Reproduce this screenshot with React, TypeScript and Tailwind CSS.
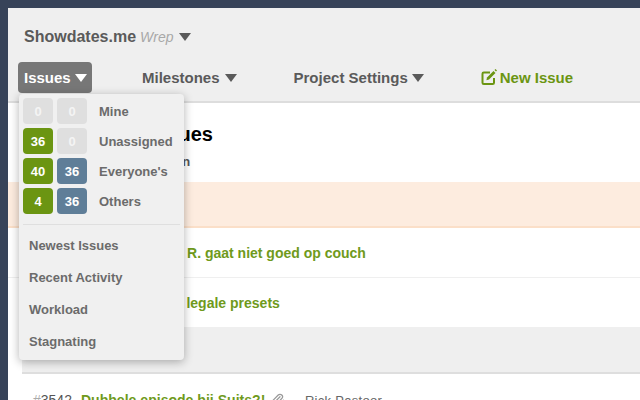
import React from "react";
import { Paperclip } from "lucide-react";

const Caret = ({ className }: { className: string }) => (
  <svg viewBox="0 0 12 8" className={`w-3 h-2 ${className}`} fill="currentColor"><path d="M0 0H12L6 8Z" /></svg>
);

const EditIcon = () => (
  <svg viewBox="0 0 16 16" className="w-4 h-4 mr-[3px] -mt-[2px]" fill="none">
    <path d="M9 3.5H2.8A1.3 1.3 0 0 0 1.5 4.8v8.9A1.3 1.3 0 0 0 2.8 15h8.9a1.3 1.3 0 0 0 1.3-1.3V9" stroke="currentColor" strokeWidth="2" />
    <path d="M6 8.5 12.5 2l2 2L8 10.5l-2.6.7Z" fill="currentColor" />
    <path d="M13.5 1l1-1 1.5 1.5-1 1Z" fill="currentColor" />
  </svg>
);

const Badge = ({ v, tone }: { v: number; tone: "g" | "b" | "n" }) => (
  <span className={`w-[30px] h-[26px] pt-px rounded-[4px] flex items-center justify-center text-[13px] font-bold ${tone === "g" ? "bg-[#6b9512] text-white" : tone === "b" ? "bg-[#5f7e98] text-white" : "bg-[#dfdfdf] text-[#f4f4f4]"}`}>{v}</span>
);

const rows: [number, "g" | "n", number, "b" | "n", string][] = [
  [0, "n", 0, "n", "Mine"],
  [36, "g", 0, "n", "Unassigned"],
  [40, "g", 36, "b", "Everyone's"],
  [4, "g", 36, "b", "Others"],
];

export default function App() {
  return (
    <div className="relative w-[640px] h-[400px] overflow-hidden bg-[#374359] pt-2 pl-2 font-['Liberation_Sans',Arial,sans-serif]">
      <div className="flex flex-col h-[392px] bg-white overflow-hidden">
        <header className="h-[95px] shrink-0 bg-[#efefef] border-b-2 border-[#dddddd] pl-4">
          <div className="flex items-center h-[20px] mt-[19px]">
            <span className="text-[16px] font-bold text-[#5a5a5a]">Showdates.me</span>
            <span className="ml-1 text-[14px] italic text-[#a8a8a8]">Wrep</span>
            <Caret className="ml-1.5 text-[#5a5a5a]" />
          </div>
          <nav className="flex items-center h-[31px] mt-[15px] -ml-1.5 pt-px text-[15px] font-bold text-[#5a5a5a]">
            <span className="w-[74px] h-[31px] -mt-px rounded-[4px] bg-[#777777] text-white flex items-center pl-1.5 pt-px">
              Issues<Caret className="ml-1 text-white" />
            </span>
            <span className="ml-[50px] flex items-center">Milestones<Caret className="ml-[5px]" /></span>
            <span className="ml-[57px] flex items-center">Project Settings<Caret className="ml-1" /></span>
            <span className="ml-[57px] flex items-center text-[#6b9512]"><EditIcon />New Issue</span>
          </nav>
        </header>
        <main className="flex-1 flex flex-col">
          <div className="h-[79px] shrink-0 pl-[86px] pt-[19px]">
            <h1 className="text-[20px] leading-[24px] font-bold text-black">Open Issues</h1>
            <p className="mt-[8px] -ml-[54px] text-[13px] leading-[16px] font-bold text-[#555]">Assigned to everyone in</p>
          </div>
          <div className="h-[46px] shrink-0 bg-[#fdecdf] border-b-2 border-[#fbdfc8]" />
          <div className="h-[50px] shrink-0 border-b border-[#efefef] flex items-center pl-[88px] pt-[2px] text-[14px] font-bold text-[#6f9a1c] whitespace-nowrap">Afspelen van R. gaat niet goed op couch</div>
          <div className="h-[49px] shrink-0 flex items-center pl-[75px] pt-[2px] text-[14px] font-bold text-[#6f9a1c] whitespace-nowrap">Ondersteuning legale presets</div>
          <div className="h-[47px] shrink-0 ml-[14px] bg-[#efefef] border-b-2 border-[#dedede]" />
          <div className="flex items-center pl-[25px] pt-[16px] text-[14px] whitespace-nowrap">
            <span className="text-[#555]"><span className="text-[#aaa]">#</span>3542</span>
            <span className="ml-[9px] font-bold text-[#6f9a1c] tracking-[0.03px]">Dubbele episode bij Suits?!</span>
            <Paperclip className="ml-[5px] w-[15px] h-[15px] text-[#999]" />
            <span className="ml-[11px] text-[#666] text-[13px] tracking-[0.3px]">· Rick Pastoor</span>
          </div>
        </main>
      </div>
      <div className="absolute left-[19px] top-[94px] w-[165px] h-[266px] rounded-[4px] bg-[#f0f0f0] shadow-[0_2px_10px_rgba(0,0,0,0.3)] px-1 pt-1">
        <div className="flex flex-col gap-1">
          {rows.map((r) => (
            <div key={r[4]} className="flex items-center gap-1 h-[26px]">
              <Badge v={r[0]} tone={r[1]} />
              <Badge v={r[2]} tone={r[3]} />
              <span className="ml-2 pt-px text-[13px] font-bold text-[#6b6b6b]">{r[4]}</span>
            </div>
          ))}
        </div>
        <div className="mt-[10px] border-t border-[#dfdfdf]" />
        <ul className="mt-[4px] pl-1.5 text-[13px] font-bold text-[#6b6b6b]">
          {["Newest Issues", "Recent Activity", "Workload", "Stagnating"].map((t) => (
            <li key={t} className="h-8 pt-px flex items-center">{t}</li>
          ))}
        </ul>
      </div>
    </div>
  );
}
